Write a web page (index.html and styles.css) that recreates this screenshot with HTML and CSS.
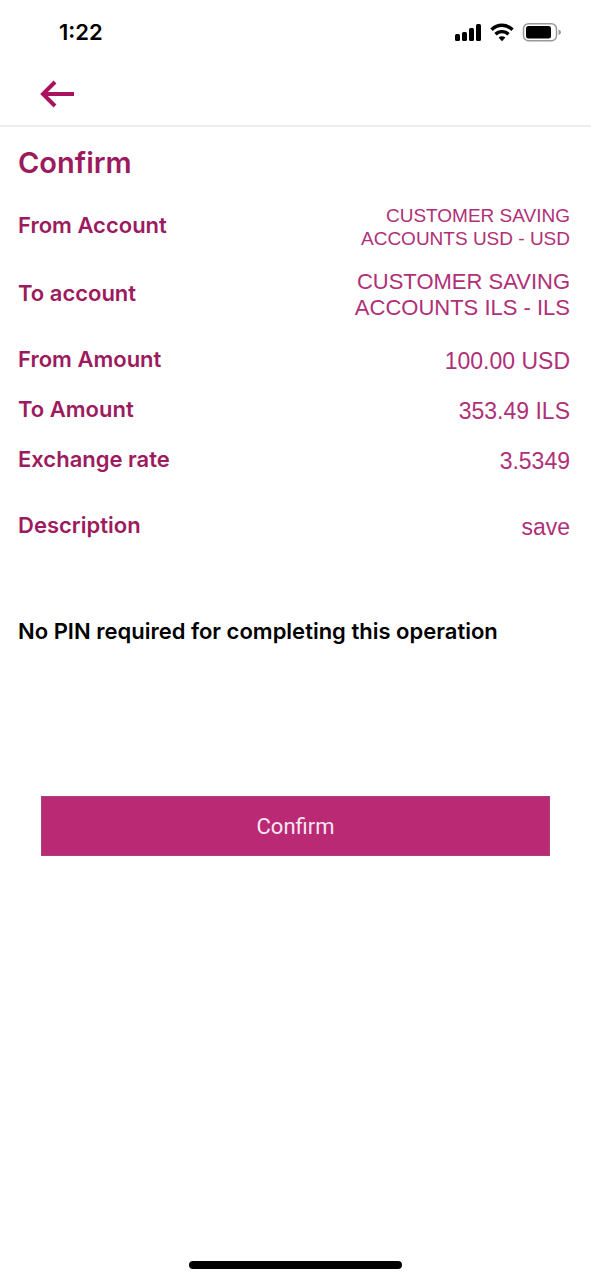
FILE: index.html
```html
<!DOCTYPE html>
<html lang="en">
<head>
<meta charset="utf-8">
<meta name="viewport" content="width=device-width, initial-scale=1">
<title>Confirm</title>
<link rel="stylesheet" href="styles.css">
</head>
<body>
<div class="screen">
  <div class="status-bar">
    <span class="time">1:22</span>
    <svg class="status-icons" width="108" height="24" viewBox="0 0 108 24" aria-hidden="true">
      <rect x="1" y="14" width="5" height="7" rx="1.5"/>
      <rect x="8" y="12" width="5" height="9" rx="1.5"/>
      <rect x="15" y="8" width="5" height="13" rx="1.5"/>
      <rect x="22" y="4" width="5" height="17" rx="1.5"/>
      <g fill="none" stroke="#000" stroke-width="3.4">
        <path d="M37.5 9.7C43.5 3.8 52.5 3.8 58.5 9.7"/>
        <path d="M41.5 14.2C45 10.8 51 10.8 54.5 14.2"/>
      </g>
      <path d="M44.6 17.6Q48 14.8 51.4 17.6L48 21.2Z"/>
      <rect x="69.5" y="3.7" width="33" height="17" rx="5" fill="none" stroke="#999" stroke-width="1.5"/>
      <rect x="72" y="6" width="25" height="12.5" rx="2.5"/>
      <path d="M104.5 9.5Q107 10 107 12.2T104.5 15Z" fill="#999"/>
    </svg>
  </div>
  <header class="nav">
    <button class="back" type="button" aria-label="Back">
      <svg width="36" height="28" viewBox="0 0 36 28" fill="none" stroke="#a9125f" stroke-width="4" aria-hidden="true">
        <path d="M15 2L3 14L15 26M3 14H34"/>
      </svg>
    </button>
  </header>
  <main class="content">
    <h1 class="title">Confirm</h1>
    <dl class="details">
      <div class="row row-tall"><dt>From Account</dt><dd class="small">CUSTOMER SAVING<br>ACCOUNTS USD - USD</dd></div>
      <div class="row row-tall"><dt>To account</dt><dd class="medium">CUSTOMER SAVING<br>ACCOUNTS ILS - ILS</dd></div>
      <div class="row amounts"><dt>From Amount</dt><dd>100.00 USD</dd></div>
      <div class="row"><dt>To Amount</dt><dd>353.49 ILS</dd></div>
      <div class="row"><dt>Exchange rate</dt><dd>3.5349</dd></div>
      <div class="row description"><dt>Description</dt><dd>save</dd></div>
    </dl>
    <p class="note">No PIN required for completing this operation</p>
    <button class="confirm" type="button">Confirm</button>
  </main>
  <div class="home-indicator"></div>
</div>
</body>
</html>
```
FILE: styles.css
```css
* { box-sizing: border-box; }
body {
  margin: 0;
  background: #fff;
  color: #000;
  font-family: Inter, "Liberation Sans", sans-serif;
}
.screen {
  min-height: 100vh;
  display: flex;
  flex-direction: column;
}
.status-bar {
  height: 64px;
  padding: 0 29px 0 59px;
  display: flex;
  align-items: center;
  justify-content: space-between;
}
.time { font-size: 22px; font-weight: 600; }
.nav {
  height: 63px;
  padding: 0 40px 2px;
  display: flex;
  align-items: center;
  border-bottom: 2px solid #eee;
}
.back {
  display: flex;
  padding: 0;
  border: 0;
  background: none;
}
.content {
  flex: 1;
  display: flex;
  flex-direction: column;
  padding: 12px 21px 0 18px;
}
.title {
  margin: 0;
  font-size: 29px;
  font-weight: 600;
  line-height: 48px;
  color: #9c1b5e;
}
.details { margin: 4px 0 0; }
.row {
  display: flex;
  align-items: center;
  justify-content: space-between;
  min-height: 50px;
}
.row-tall { min-height: 68px; }
.amounts { margin-top: 7px; }
.description { margin-top: 16px; }
dt {
  font-size: 22px;
  font-weight: 600;
  color: #9c1b5e;
}
dd {
  margin: 0;
  padding-top: 3px;
  font: 23px/26px "Liberation Sans", Arial, sans-serif;
  color: #b03078;
  text-align: right;
}
.medium { font-size: 22px; }
.small { font-size: 19px; line-height: 23px; }
.note {
  margin: 66px 0 0;
  font-size: 22px;
  font-weight: 600;
  line-height: 30px;
}
.confirm {
  margin: 150px 20px 0 23px;
  height: 60px;
  border: 1px solid #a8417c;
  background: #b92974;
  color: #fde6f3;
  font: 22px Roboto, sans-serif;
}
.home-indicator {
  width: 36%;
  height: 8px;
  margin: 0 auto 11px;
  border-radius: 4px;
  background: #000;
}
```
